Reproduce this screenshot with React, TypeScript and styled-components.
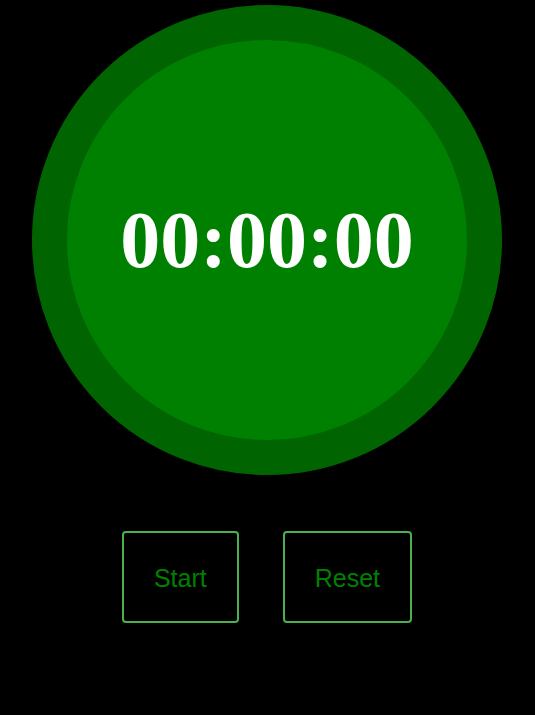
import React from "react";
import styled, { createGlobalStyle } from "styled-components";

const Global = createGlobalStyle`
  html, body { margin: 0; padding: 0; background: #000; }
  body { font-family: "Liberation Sans", Arial, sans-serif; }
`;

const Page = styled.div`
  min-height: 715px;
  background: #000;
  display: flex;
  flex-direction: column;
  align-items: center;
  padding: 5px 0 0 0;
  box-sizing: border-box;
`;

const Dial = styled.div`
  width: 400px;
  height: 400px;
  border: 35px solid #006400;
  border-radius: 50%;
  background: #008000;
  display: flex;
  align-items: center;
  justify-content: center;
  margin-left: -1px;
`;

const Time = styled.div`
  font-family: "Liberation Serif", "Times New Roman", serif;
  font-weight: bold;
  font-size: 80px;
  color: #fff;
  line-height: 1;
`;

const Controls = styled.div`
  display: flex;
  gap: 44px;
  margin-top: 56px;
  margin-left: -1px;
`;

const Button = styled.button`
  background: #000;
  color: #008000;
  border: 2px solid #4caf50;
  border-radius: 4px;
  font-family: "Liberation Sans", Arial, sans-serif;
  font-size: 25px;
  line-height: 28px;
  padding: 31px 30px 29px;
  cursor: pointer;
`;

export default function App() {
  return (
    <>
      <Global />
      <Page>
        <Dial>
          <Time>00:00:00</Time>
        </Dial>
        <Controls>
          <Button>Start</Button>
          <Button>Reset</Button>
        </Controls>
      </Page>
    </>
  );
}
